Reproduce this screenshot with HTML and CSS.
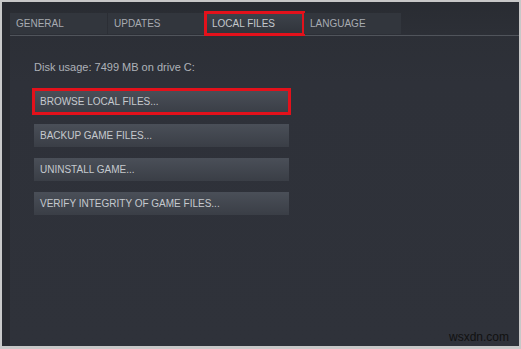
FILE: index.html
```html
<!DOCTYPE html>
<html lang="en">
  <head>
    <meta charset="utf-8">
    <title>Local files</title>
    <link rel="stylesheet" href="styles.css">
  </head>
  <body>
    <div class="window">
      <div class="gutter"></div>
      <div class="main">
        <div class="tabs">
          <div class="tab">GENERAL</div>
          <div class="tab">UPDATES</div>
          <div class="tab active marked">LOCAL FILES</div>
          <div class="tab">LANGUAGE</div>
        </div>
        <div class="panel">
          <p class="disk">Disk usage: 7499 MB on drive C:</p>
          <div class="btn marked">BROWSE LOCAL FILES...</div>
          <div class="btn">BACKUP GAME FILES...</div>
          <div class="btn">UNINSTALL GAME...</div>
          <div class="btn">VERIFY INTEGRITY OF GAME FILES...</div>
        </div>
        <div class="mark">wsxdn.com</div>
      </div>
    </div>
  </body>
</html>
```

FILE: styles.css
```css
html {
  font-family: "Liberation Sans", Arial, sans-serif;
}

body {
  margin: 0;
  background: #c8c8c8;
  height: 349px;
  overflow: hidden;
}

.window {
  display: flex;
  margin: 2px 2px 0 2px;
  height: 344px;
  background: linear-gradient(#292c32 0px, #2c2f36 30px, #2e3139 80px, #2f323a);
}

.gutter {
  width: 8px;
  background: #282a30;
}

.main {
  flex: 1;
  display: flex;
  flex-direction: column;
}

.tabs {
  display: flex;
  gap: 1px;
  margin-top: 11px;
  padding-bottom: 1px;
  border-bottom: 1px solid #50545b;
}

.tab {
  width: 91px;
  height: 21px;
  padding-left: 6px;
  line-height: 21px;
  font-size: 10px;
  color: #a7abb1;
  background: #32363d;
}

.tab.active {
  color: #c4c8cd;
  background: linear-gradient(#3e434b, #30343b);
}

.marked {
  outline: 3px solid #e3111b;
  outline-offset: -1px;
}

.panel {
  flex: 1;
  padding-left: 24px;
  display: flex;
  flex-direction: column;
  gap: 11px;
}

.disk {
  margin: 25px 0 5px;
  font-size: 11px;
  line-height: 13px;
  color: #aeb2b8;
}

.btn {
  width: 249px;
  height: 23px;
  padding-left: 6px;
  line-height: 23px;
  font-size: 10px;
  color: #c5c9ce;
  background: linear-gradient(#4a4f58, #3a3e46);
}

.mark {
  align-self: flex-end;
  margin: 0 10px 2px 0;
  font-size: 12px;
  line-height: 14px;
  color: #111;
}
```
